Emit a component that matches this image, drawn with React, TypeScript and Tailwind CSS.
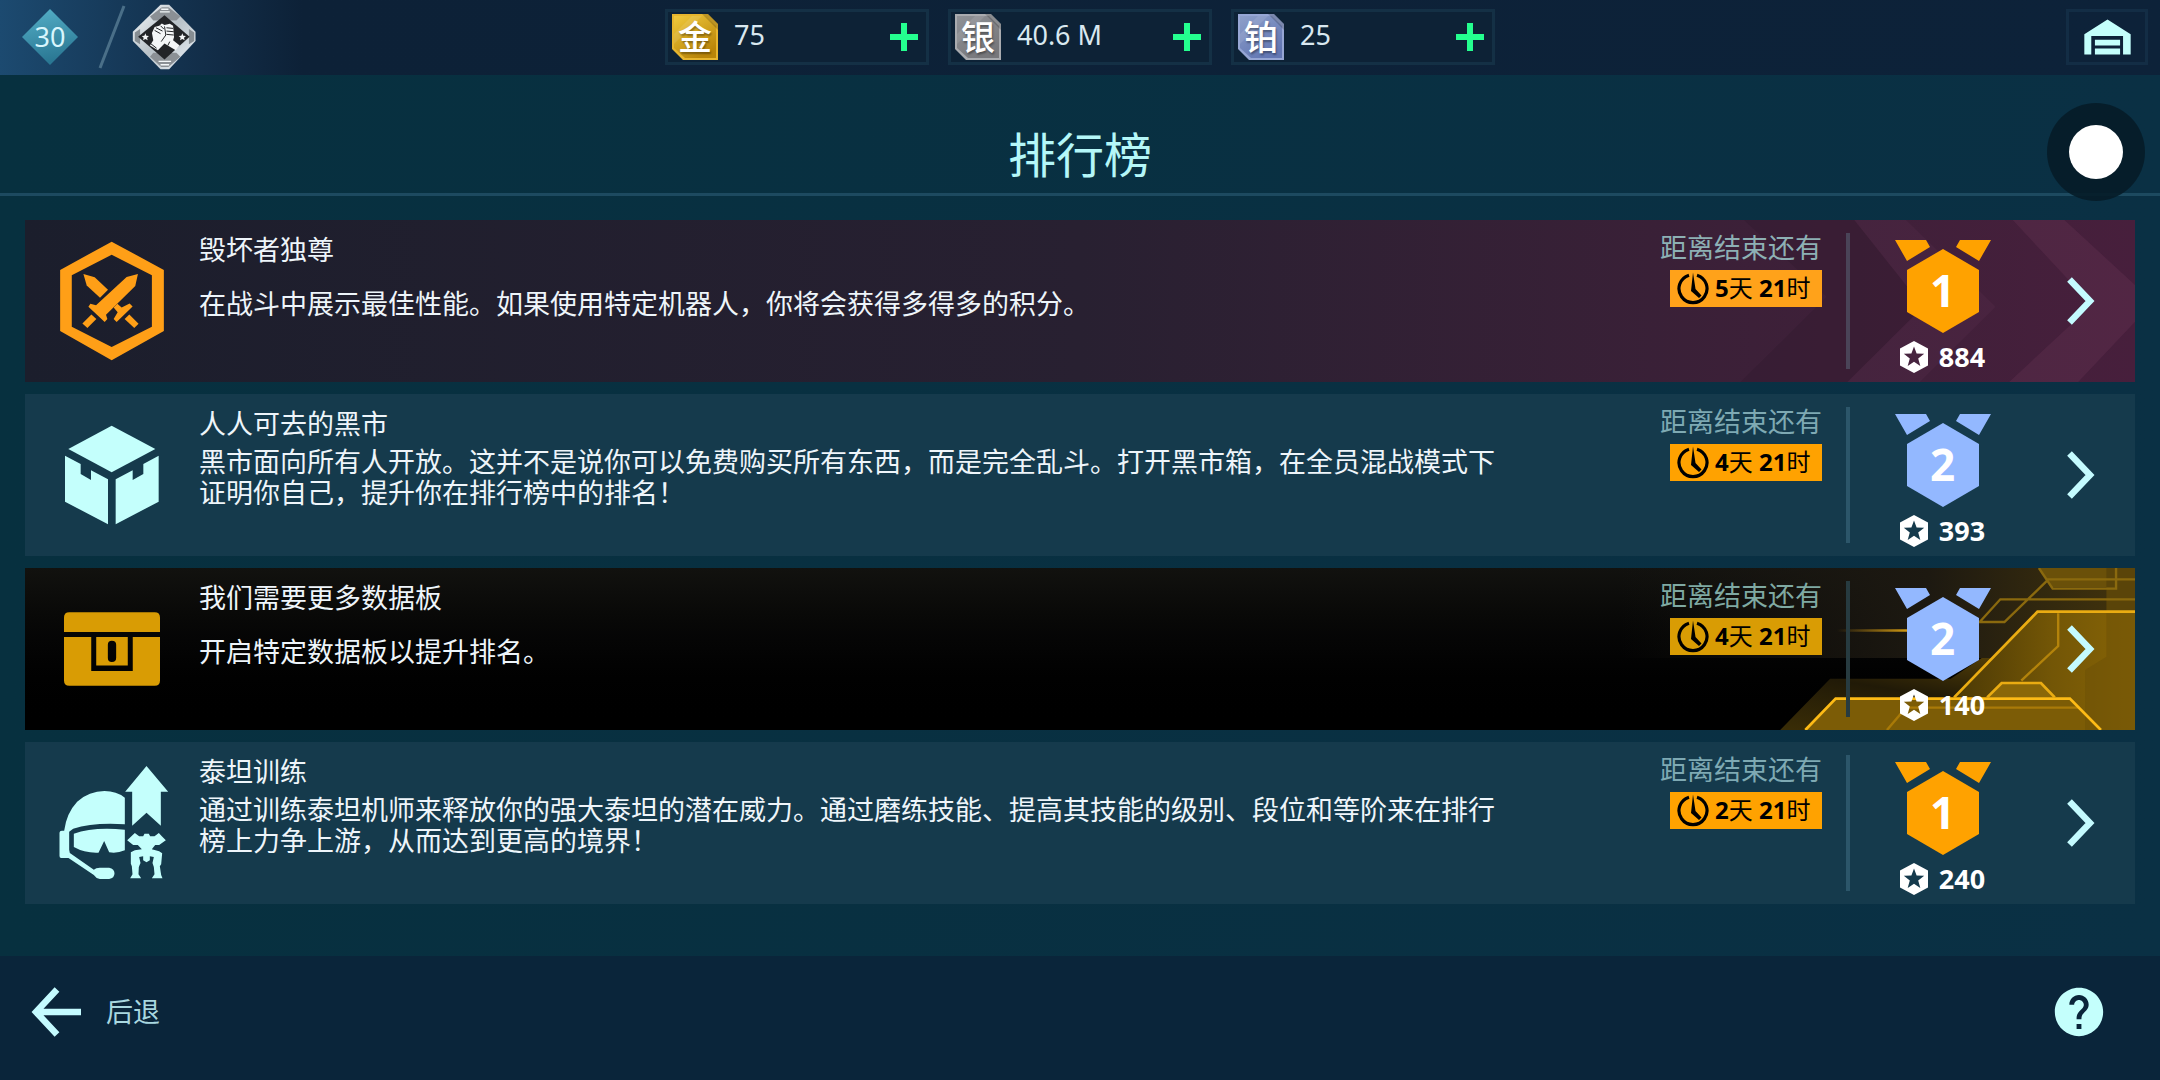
import type { ReactNode } from "react";
import { MdHelp } from "react-icons/md";

type Currency = { glyph: string; name: string; amount: string; from: string; to: string; edge: string };

const currencies: Currency[] = [
  { glyph: "金", name: "金币", amount: "75", from: "#f0c93c", to: "#b98508", edge: "#e6b52e" },
  { glyph: "银", name: "银币", amount: "40.6 M", from: "#8f9297", to: "#77777b", edge: "#a9abaf" },
  { glyph: "铂", name: "铂金", amount: "25", from: "#8d9fc9", to: "#6377b4", edge: "#96a6d4" },
];

type Board = {
  title: string;
  text: string;
  days: number;
  hours: number;
  rank: number;
  score: number;
  icon: ReactNode;
  surface: string;
  medal: string;
  chip: string;
  label: string;
  divider: string;
  art?: ReactNode;
};

function CurrencyIcon({ c, id }: { c: Currency; id: string }) {
  return (
    <span className="relative flex size-[46px] items-center justify-center">
      <svg viewBox="0 0 46 46" className="absolute inset-0 size-full" aria-hidden="true">
        <defs>
          <linearGradient id={id} x1="0" y1="0" x2="0.6" y2="1">
            <stop offset="0" stopColor={c.from} />
            <stop offset="1" stopColor={c.to} />
          </linearGradient>
        </defs>
        <path d="M0 0H36L46 10V46H11L0 35Z" fill={c.edge} />
        <path d="M2 2H34L44 12V44H13L2 34Z" fill={`url(#${id})`} />
        <path d="M36 0L46 10V16L30 0Z" fill="#000" opacity=".18" />
        <path d="M2 20L20 2H30L2 30Z" fill="#fff" opacity=".1" />
      </svg>
      <span className="relative text-[34px] leading-[46px] font-medium text-white [text-shadow:1px_2px_2px_rgba(0,0,0,0.35)]">
        {c.glyph}
      </span>
    </span>
  );
}

function CurrencyBox({ c, id }: { c: Currency; id: string }) {
  return (
    <div className="flex h-[56px] w-[264px] items-center border-3 border-[#143045] bg-[#0d2236] pr-2 pl-1">
      <CurrencyIcon c={c} id={id} />
      <span className="ml-4 flex-1 pb-1 text-[27px] leading-none text-[#d9e8f0]">{c.amount}</span>
      <button type="button" aria-label={`购买${c.name}`} className="text-[#24ff8f]">
        <svg viewBox="0 0 28 28" className="size-7" fill="currentColor" aria-hidden="true">
          <path d="M11 0h6v11h11v6H17v11h-6V17H0v-6h11z" />
        </svg>
      </button>
    </div>
  );
}

function ClanBadge() {
  return (
    <svg viewBox="396 12 196 200" className="h-[66px] w-[65px]" aria-hidden="true">
      <defs>
        <linearGradient id="badge" x1="0" y1="0" x2="1" y2="1">
          <stop offset="0" stopColor="#f4f8fb" />
          <stop offset="0.5" stopColor="#b9c2c8" />
          <stop offset="1" stopColor="#eef4fa" />
        </linearGradient>
      </defs>
      <path d="M482 14H508L588 96V124L508 210H482L398 124V96Z" fill="url(#badge)" />
      <path d="M450 50L486 22H506L542 50L530 62H460Z" fill="#8b9095" />
      <path d="M450 172L484 203H506L542 172L530 160H460Z" fill="#8b9095" />
      <path d="M404 98L420 88V134L404 124ZM584 98L568 88V134L584 124Z" fill="#868d92" />
      <path d="M494 46L570 111L494 180L414 111Z" fill="#222427" />
      <path d="M480 36H510M484 28H506M476 186H514M482 196H508" stroke="#f2f6f8" strokeWidth="4" fill="none" />
      <path d="M436 101l3 7 8 1-6 5 2 8-7-4-7 4 2-8-6-5 8-1zM548 101l3 7 8 1-6 5 2 8-7-4-7 4 2-8-6-5 8-1z" fill="#f4f6f7" />
      <path d="M450 138L460 122L456 100L464 82L478 78L486 71L494 76L510 72L520 78L523 112L520 122L540 138L528 152L504 138L494 132L474 152Z" fill="#f4f6f7" />
      <path d="M464 92L482 102M468 84L488 94M482 78L492 88M500 84L520 86M500 94L522 96M500 104L522 106M494 80L498 106L484 126M452 132L470 146M510 126L504 138" stroke="#222427" strokeWidth="3" fill="none" />
    </svg>
  );
}

function SwordsIcon() {
  return (
    <svg viewBox="117 93 318 361" className="h-[120px] w-[106px]" fill="#ff9f17" aria-hidden="true">
      <path fillRule="evenodd" d="M275 95L432 180V364L275 452L120 364V180ZM275 134L155 196V351L275 412L396 351V196Z" />
      <path d="M190 192L224 202L264 240L240 264L200 227Z" />
      <path d="M354 192L346 228L258 315L262 328L254 337L205 291L211 282L228 286L320 201Z" />
      <path d="M214 314L229 328L202 355L187 341Z" />
      <path d="M292 282L305 293L329 281L338 290L290 337L281 328L293 307L281 293Z" />
      <path d="M328 314L356 342L343 355L314 328Z" />
    </svg>
  );
}

function CubeIcon() {
  return (
    <svg viewBox="132 120 288 300" className="h-[100px] w-[96px]" fill="#c4fffc" aria-hidden="true">
      <path d="M275 122L406 192L275 262L145 192Z" />
      <path d="M135 212L182 237V267L213 285V256L264 283V418L135 350Z" />
      <path d="M416 212L370 237V267L338 285V256L287 283V418L416 350Z" />
    </svg>
  );
}

function ChestIcon() {
  return (
    <svg viewBox="131 156 289 222" className="h-[74px] w-[96px]" fill="#d99c04" aria-hidden="true">
      <path d="M131 216V172Q131 156 147 156H404Q420 156 420 172V216Z" />
      <path d="M131 231H213V333H338V231H420V362Q420 378 404 378H147Q131 378 131 362Z" />
      <path fillRule="evenodd" d="M228 231H323V317H228ZM275 242Q263 242 263 254V294Q263 306 275 306Q288 306 288 294V254Q288 242 275 242Z" />
    </svg>
  );
}

function PilotIcon() {
  return (
    <svg viewBox="106 93 341 345" className="h-[115px] w-[114px]" fill="#c4fffc" aria-hidden="true">
      <path d="M380 93L445 170H423V272L380 233L337 272V170H316Z" />
      <path d="M315 188V268Q220 262 160 281L148 290V344L150 354L222 404Q228 398 240 398H268Q284 402 284 415Q284 430 268 432H240Q228 430 222 420L146 369H124Q119 369 119 363V293Q119 287 126 287H133Q140 234 172 200Q208 168 254 168Q290 168 315 188Z" />
      <path d="M162 296Q220 275 315 284V346Q292 356 268 352L253 318L236 353Q196 355 162 336Z" />
      <path d="M345 294L358 304H370L374 296H387L391 304H404L417 294L426 304L438 316L418 330H406L396 343L418 349L427 355L424 388L420 394L424 420L428 430H396L404 418L402 396L398 384L402 366L390 364V376L380 382L370 376V364L358 366L362 384L357 396L356 418L364 430H331L338 418L336 394L333 386V352L345 346L366 343L354 330H340L322 316Z" />
    </svg>
  );
}

function CrimsonArt() {
  return (
    <svg viewBox="0 30 1495 486" preserveAspectRatio="none" className="absolute inset-y-0 right-0 h-full w-[515px]" aria-hidden="true">
      <path d="M360 30H680L880 290L660 516H350L600 260Z" fill="#1c1020" opacity=".16" />
      <g fill="#c46ca0">
        <path d="M680 30H830L1090 290L870 516H660L880 290Z" opacity=".05" />
        <path d="M1140 30H1290L1495 225V335L1330 516H1130L1370 285Z" opacity=".09" />
      </g>
    </svg>
  );
}

function CircuitArt() {
  return (
    <svg viewBox="0 24 1495 486" preserveAspectRatio="none" className="absolute inset-y-0 right-0 h-full w-[515px]" aria-hidden="true">
      <defs>
        <linearGradient id="panel" x1="0" y1="0" x2="1" y2="0">
          <stop offset="0" stopColor="#4a3805" />
          <stop offset="0.55" stopColor="#735606" />
          <stop offset="1" stopColor="#876406" />
        </linearGradient>
        <linearGradient id="haze" x1="0" y1="0" x2="1" y2="0">
          <stop offset="0" stopColor="#1a1712" stopOpacity="0" />
          <stop offset="0.6" stopColor="#1d1911" />
          <stop offset="1" stopColor="#43340c" />
        </linearGradient>
        <linearGradient id="floor" x1="0" y1="1" x2="0.8" y2="0">
          <stop offset="0" stopColor="#3a2d06" />
          <stop offset="0.5" stopColor="#211a07" />
          <stop offset="1" stopColor="#5c4507" />
        </linearGradient>
        <linearGradient id="streak" gradientUnits="userSpaceOnUse" x1="630" y1="0" x2="840" y2="0">
          <stop offset="0" stopColor="#c99211" stopOpacity="0" />
          <stop offset="1" stopColor="#d79d12" />
        </linearGradient>
      </defs>
      <rect x="0" y="24" width="1495" height="270" fill="url(#haze)" />
      <path d="M465 510L610 356H960L1050 294H1495V510Z" fill="url(#floor)" />
      <path d="M970 412L1212 155H1495V510H960Z" fill="url(#panel)" />
      <path d="M538 510L626 416H1306L1396 510Z" fill="#7c5c06" />
      <path d="M1066 412L1108 369H1222L1262 412Z" fill="#8a6708" />
      <path d="M1216 24H1495V82H1250Z" fill="#6a5009" />
      <path d="M1412 24H1495V155H1412Z" fill="#5a4409" />
      <path d="M1350 330L1412 290V160H1495V510H1350Z" fill="#6b5006" opacity=".5" />
      <g fill="none" stroke="#8a690e" strokeWidth="7">
        <path d="M1216 24L1256 86H1440V24M1240 58H1495M1495 118H1104L1044 186H1116L1240 62" />
        <path d="M1272 160V258L1165 362" stroke="#b3830b" />
        <path d="M775 510L830 443H1330" stroke="#a97a08" />
      </g>
      <path d="M630 208H840V215H630Z" fill="url(#streak)" />
      <g fill="none" stroke="#fdbb16" strokeWidth="8">
        <path d="M538 510L626 416H1306L1396 510" />
        <path d="M970 412L1212 155H1495" stroke="#eaac12" />
        <path d="M1066 412L1108 369H1222L1262 412" stroke="#eaac12" />
      </g>
    </svg>
  );
}

const boards: Board[] = [
  {
    title: "毁坏者独尊",
    text: "在战斗中展示最佳性能。如果使用特定机器人，你将会获得多得多的积分。",
    days: 5,
    hours: 21,
    rank: 1,
    score: 884,
    icon: <SwordsIcon />,
    surface: "bg-linear-to-r from-[#1b1e2c] via-[#282031] to-[#471f3c]",
    medal: "text-[#ffa200]",
    chip: "bg-[#ffa21a]",
    label: "text-[#8db0b4]",
    divider: "bg-[#4a4458]",
    art: <CrimsonArt />,
  },
  {
    title: "人人可去的黑市",
    text: "黑市面向所有人开放。这并不是说你可以免费购买所有东西，而是完全乱斗。打开黑市箱，在全员混战模式下证明你自己，提升你在排行榜中的排名！",
    days: 4,
    hours: 21,
    rank: 2,
    score: 393,
    icon: <CubeIcon />,
    surface: "bg-[#153a4c]",
    medal: "text-[#93b8ff]",
    chip: "bg-[#ffa200]",
    label: "text-[#7ea9b3]",
    divider: "bg-[#2c566a]",
  },
  {
    title: "我们需要更多数据板",
    text: "开启特定数据板以提升排名。",
    days: 4,
    hours: 21,
    rank: 2,
    score: 140,
    icon: <ChestIcon />,
    surface: "bg-linear-to-b from-[#12120f] via-[#040404] to-black",
    medal: "text-[#93b8ff]",
    chip: "bg-[#d99c04]",
    label: "text-[#7fa9a2]",
    divider: "bg-[#273b40]",
    art: <CircuitArt />,
  },
  {
    title: "泰坦训练",
    text: "通过训练泰坦机师来释放你的强大泰坦的潜在威力。通过磨练技能、提高其技能的级别、段位和等阶来在排行榜上力争上游，从而达到更高的境界！",
    days: 2,
    hours: 21,
    rank: 1,
    score: 240,
    icon: <PilotIcon />,
    surface: "bg-[#153a4c]",
    medal: "text-[#ffa200]",
    chip: "bg-[#ffa200]",
    label: "text-[#7ea9b3]",
    divider: "bg-[#2c566a]",
  },
];

function ClockIcon() {
  return (
    <svg viewBox="0 0 32 34" className="h-[34px] w-8 shrink-0" aria-hidden="true">
      <path d="M12 3.2A14 14 0 1 0 20 3.2" fill="none" stroke="#000" strokeWidth="3.2" />
      <path d="M16 0.5L18.5 17L24.5 23.5L22 26L14 19Z" fill="#000" />
    </svg>
  );
}

function Medal({ rank, tone }: { rank: number; tone: string }) {
  return (
    <div className={`relative h-[93px] w-[98px] ${tone}`}>
      <svg viewBox="0 0 98 93" className="absolute inset-0 size-full" fill="currentColor" aria-hidden="true">
        <path d="M49 9L85 30V72L49 93L13 72V30Z" />
        <path d="M1 0H32L36 7L13 21ZM97 0H66L62 7L85 21Z" />
      </svg>
      <span className="absolute inset-x-0 top-7 text-center text-[44px] leading-[44px] font-bold text-white">{rank}</span>
    </div>
  );
}

function BoardCard({ b }: { b: Board }) {
  return (
    <li className={`relative flex min-h-[162px] ${b.surface}`}>
      {b.art}
      <div className="relative flex w-[174px] shrink-0 items-center justify-center">{b.icon}</div>
      <div className="relative min-w-0 flex-1 pt-[14px] pb-4 text-[27px] leading-[31px] text-[#eef5fa]">
        <h2>{b.title}</h2>
        <p className="mt-[7px] flex min-h-[62px] max-w-[1304px] items-center">{b.text}</p>
      </div>
      <div className="relative flex shrink-0 flex-col items-end pt-3 pl-8">
        <span className={`text-[27px] leading-[32px] ${b.label}`}>距离结束还有</span>
        <span className={`mt-[6px] flex h-[37px] w-[152px] items-center gap-[6px] pl-[7px] text-[24px] leading-none font-bold text-black ${b.chip}`}>
          <ClockIcon />
          <span className="pb-[2px] whitespace-nowrap">
            {b.days}
            <span className="font-normal">天</span> {b.hours}
            <span className="font-normal">时</span>
          </span>
        </span>
      </div>
      <div className={`relative mt-[13px] ml-6 h-[136px] w-1 shrink-0 ${b.divider}`} />
      <div className="relative flex w-[185px] shrink-0 flex-col items-center pt-5">
        <Medal rank={b.rank} tone={b.medal} />
        <div className="mt-2 flex items-center gap-[11px] text-[27px] leading-8 font-bold text-white">
          <svg viewBox="0 0 28 32" className="h-8 w-7" fill="currentColor" aria-hidden="true">
            <path
              fillRule="evenodd"
              d="M14 0L28 7.5V24.5L14 32L0 24.5V7.5ZM14 5.5L11.4 12.6L3.8 12.8L9.8 17.4L7.7 25L14 20.7L20.3 25L18.2 17.4L24.2 12.8L16.6 12.6Z"
            />
          </svg>
          {b.score}
        </div>
      </div>
      <button type="button" aria-label={`查看${b.title}`} className="relative flex w-[100px] shrink-0 items-center pl-8 text-[#c4fbff]">
        <svg viewBox="0 0 28 48" className="h-12 w-7" fill="none" stroke="currentColor" strokeWidth="6.5" aria-hidden="true">
          <path d="M2.5 2.5L23 24L2.5 45.5" />
        </svg>
      </button>
    </li>
  );
}

export default function App() {
  return (
    <div className="relative flex min-h-screen flex-col bg-linear-to-r from-[#07303f] to-[#0a3044] font-['Noto_Sans','Noto_Sans_CJK_SC',sans-serif]">
      <header className="grid h-[75px] grid-cols-[1fr_auto_1fr] items-center bg-linear-to-r from-[#1c4a70] via-[#0d2137] via-14% to-[#0d2239] pb-[2px]">
        <div className="flex items-center pl-[22px]">
          <span className="relative flex size-14 items-center justify-center">
            <svg viewBox="0 0 56 56" className="absolute inset-0 size-full" aria-hidden="true">
              <defs>
                <linearGradient id="level" x1="0" y1="0" x2="0.2" y2="1">
                  <stop offset="0" stopColor="#55b0c8" />
                  <stop offset="1" stopColor="#2a7793" />
                </linearGradient>
              </defs>
              <path d="M28 0L56 28L28 56L0 28Z" fill="url(#level)" />
            </svg>
            <span className="relative text-[27px] leading-none text-[#d8f6fd]">30</span>
          </span>
          <svg viewBox="0 0 28 64" className="ml-5 h-16 w-7" aria-hidden="true">
            <path d="M26 1L2 63" stroke="#4a6f88" strokeWidth="3" />
          </svg>
          <span className="ml-[6px]">
            <ClanBadge />
          </span>
        </div>
        <div className="flex gap-[19px]">
          {currencies.map((c, i) => (
            <CurrencyBox key={c.glyph} c={c} id={`coin-${i}`} />
          ))}
        </div>
        <button type="button" aria-label="机库" className="mr-3 flex h-[56px] w-[82px] items-center justify-center justify-self-end border-3 border-[#132d45] text-[#c4fffc]">
          <svg viewBox="371 54 142 108" className="h-9 w-[47px]" fill="currentColor" aria-hidden="true">
            <path d="M442 55L512 100V161H489V105H393V161H372V100Z" />
            <path d="M404 116H480V134H404ZM404 143H480V161H404Z" />
          </svg>
        </button>
      </header>

      <div className="flex h-[121px] items-end justify-center border-b-3 border-[#1d4a60] pb-2">
        <h1 className="text-[48px] leading-[60px] text-[#b4f7f8]">排行榜</h1>
      </div>

      <ul className="flex flex-col gap-3 px-[25px] pt-6 pb-[52px]">
        {boards.map((b) => (
          <BoardCard key={b.title} b={b} />
        ))}
      </ul>

      <footer className="mt-auto flex h-[124px] items-center justify-between bg-[#0a253a] pr-[52px] pb-3 pl-[31px]">
        <button type="button" className="flex items-center gap-[25px] text-[27px] text-[#a9d8e0]">
          <svg viewBox="0 0 50 50" className="size-[50px]" fill="none" stroke="#c4fbff" strokeWidth="6.5" aria-hidden="true">
            <path d="M26 2.5L5 25L26 47.5M5 25H50" />
          </svg>
          后退
        </button>
        <button type="button" aria-label="帮助" className="text-[#c4fffc]">
          <MdHelp className="size-[58px]" />
        </button>
      </footer>

      <button
        type="button"
        aria-label="悬浮菜单"
        className="absolute top-[103px] right-[15px] flex size-[98px] items-center justify-center rounded-full bg-[#051c28]/90"
      >
        <span className="size-[54px] rounded-full bg-white" />
      </button>
    </div>
  );
}
